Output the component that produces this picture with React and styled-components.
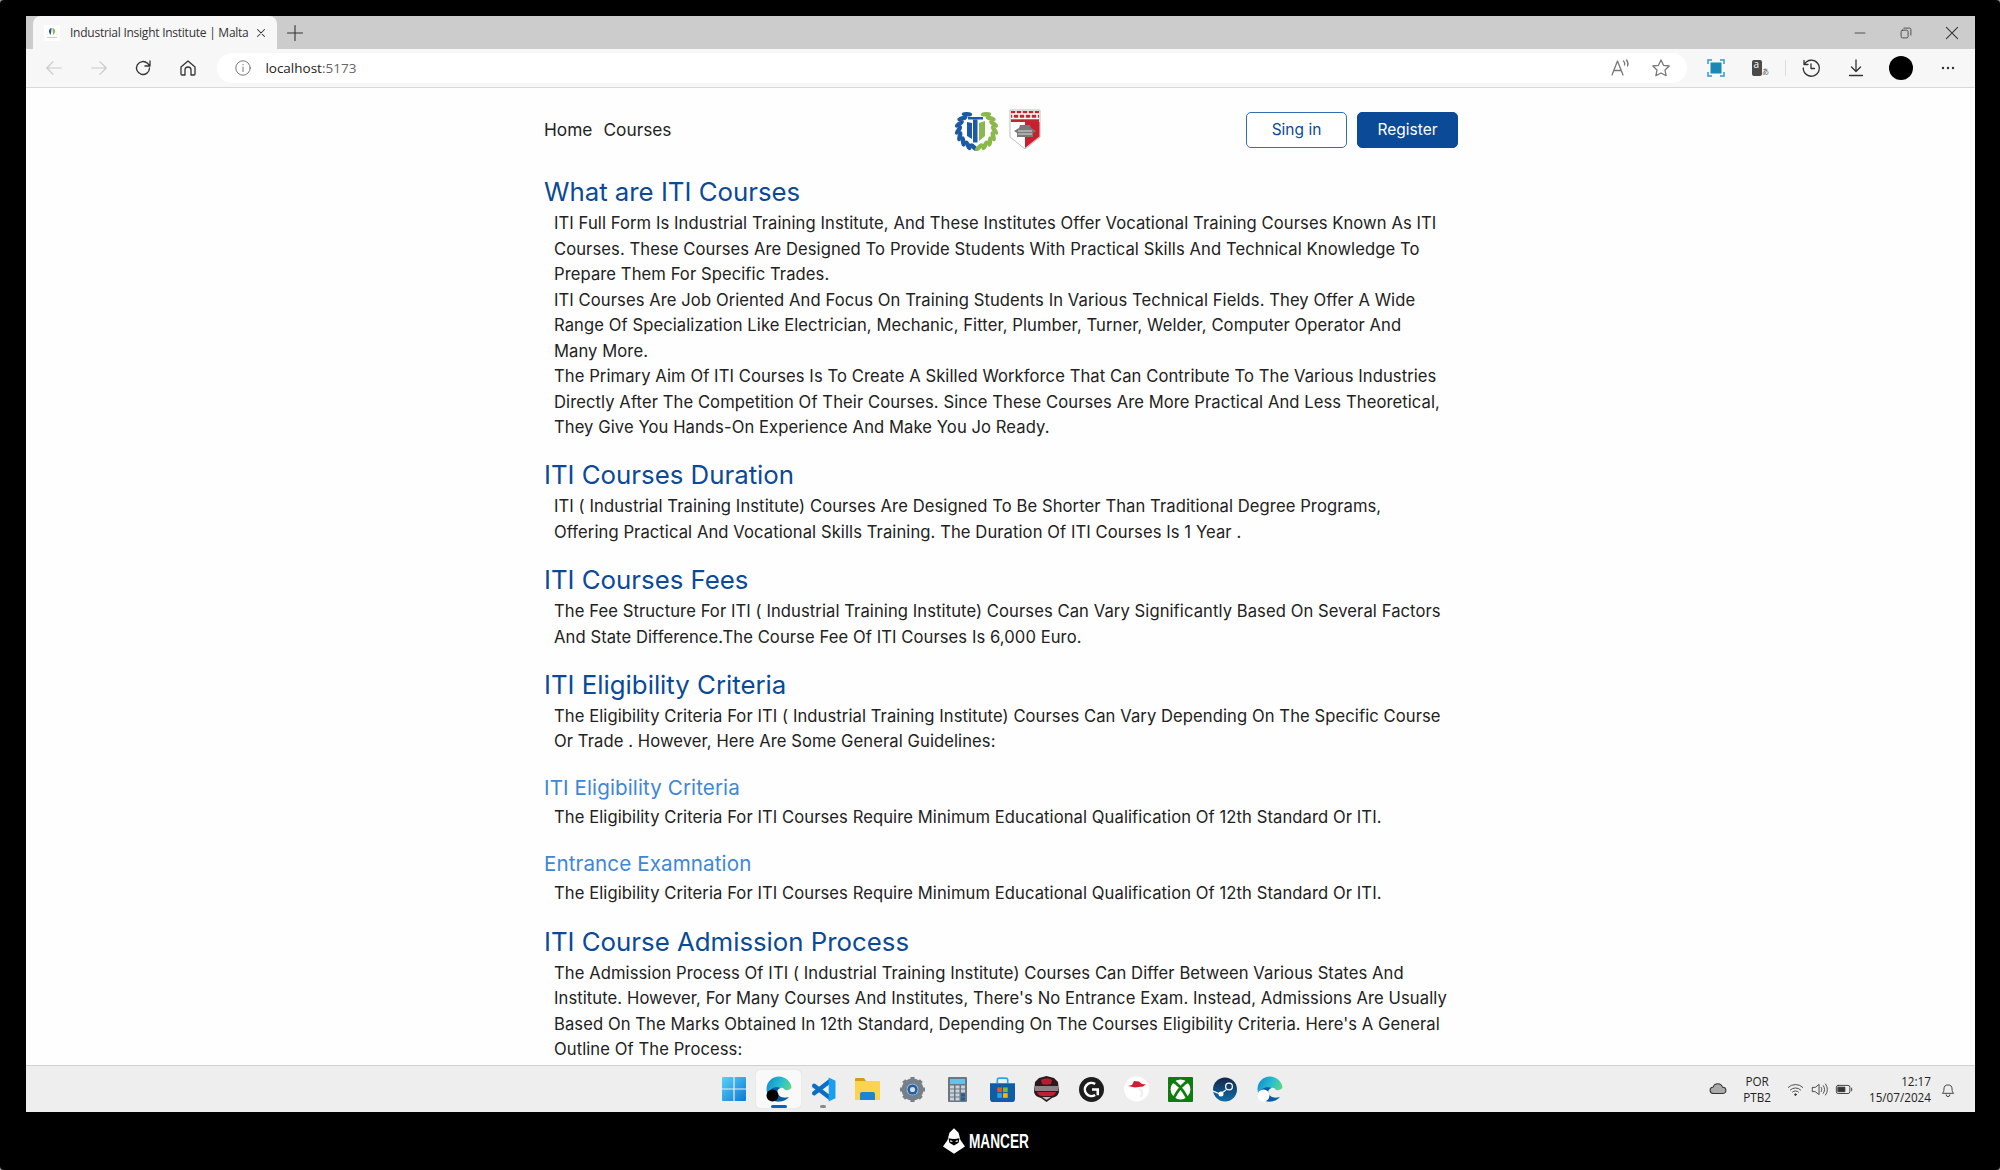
import React from "react";
import styled, { createGlobalStyle } from "styled-components";

const GlobalStyle = createGlobalStyle`
  html, body {
    margin: 0;
    padding: 0;
    background: #999;
  }
  body {
    width: 2000px;
    height: 1170px;
    overflow: hidden;
  }
  h1, h2, h3, p {
    margin: 0;
  }
`;

const Screen = styled.div`
  width: 2000px;
  height: 1170px;
  box-sizing: border-box;
  padding: 16px 25px 0 26px;
  background: #000;
  border-radius: 4px;
  display: flex;
  flex-direction: column;
`;
const Win = styled.div`
  height: 1096px;
  display: flex;
  flex-direction: column;
  background: #fff;
  overflow: hidden;
`;
const TabStrip = styled.div`
  height: 33px;
  flex: none;
  background: #cccccc;
  display: flex;
  align-items: flex-end;
  padding-left: 7px;
`;
const Tab = styled.div`
  width: 244px;
  height: 33px;
  box-sizing: border-box;
  background: #f7f7f7;
  border-radius: 8px 8px 0 0;
  display: flex;
  align-items: center;
  padding: 0 9px 0 11px;
  font: 12px "Open Sans", sans-serif;
  color: #333;
  svg {
    flex: none;
  }
`;
const TabTitle = styled.span`
  margin-left: 10px;
  flex: 1;
  min-width: 0;
  white-space: nowrap;
  letter-spacing: -0.25px;
`;
const NewTab = styled.div`
  width: 36px;
  height: 33px;
  display: flex;
  align-items: center;
  justify-content: center;
`;
const WinControls = styled.div`
  margin-left: auto;
  display: flex;
  height: 33px;
`;
const WinButton = styled.div`
  width: 46px;
  display: flex;
  align-items: center;
  justify-content: center;
`;
const Toolbar = styled.div`
  height: 38px;
  flex: none;
  background: #f7f7f7;
  border-bottom: 1px solid #d9d9d9;
  display: flex;
  align-items: center;
  padding-left: 6px;
`;
const ToolCell = styled.div`
  width: ${p => p.$w || 45}px;
  height: 38px;
  flex: none;
  display: flex;
  align-items: center;
  justify-content: center;
`;
const AddressBar = styled.div`
  width: 1470px;
  height: 30px;
  margin: 0 6px 0 7px;
  flex: none;
  background: #fff;
  border-radius: 15px;
  display: flex;
  align-items: center;
  padding: 0 16px 0 17px;
  box-sizing: border-box;
  font: 13.5px "Open Sans", sans-serif;
`;
const Host = styled.span`
  margin-left: 13px;
  color: #222;
  span {
    color: #666;
  }
`;
const AddressActions = styled.div`
  margin-left: auto;
  display: flex;
  align-items: center;
  gap: 21px;
`;
const ToolSep = styled.div`
  width: 1px;
  height: 16px;
  background: #ddd;
  margin: 0 2px;
  flex: none;
`;
const Avatar = styled.div`
  width: 24px;
  height: 24px;
  border-radius: 50%;
  background: #000;
`;
const TranslateIcon = styled.svg`
  overflow: visible;
`;

const Page = styled.main`
  flex: 1;
  min-height: 0;
  overflow: hidden;
  background: #fefefe;
`;
const Column = styled.div`
  width: 915px;
  margin-left: 518px;
`;
const Header = styled.header`
  height: 83px;
  display: grid;
  grid-template-columns: 1fr auto 1fr;
  align-items: center;
`;
const Nav = styled.nav`
  display: flex;
  gap: 11px;
  font: 400 17.3px "Inter", sans-serif;
  color: #222;
`;
const Logos = styled.div`
  display: flex;
  align-items: center;
  gap: 9px;
  margin-right: 10px;
`;
const Actions = styled.div`
  display: flex;
  justify-content: flex-end;
  gap: 10px;
  padding-right: 1px;
`;
const Button = styled.button`
  width: 101px;
  height: 36px;
  box-sizing: border-box;
  border-radius: 5px;
  border: 1px solid ${p => (p.$primary ? "#0a4a96" : "#2f6fb5")};
  background: ${p => (p.$primary ? "#0a4a96" : "#fff")};
  color: ${p => (p.$primary ? "#fff" : "#0a4a96")};
  font: 400 15.5px "Inter", sans-serif;
  padding: 0;
`;
const Section = styled.section`
  margin-bottom: 14.8px;
`;
const Heading = styled.h2`
  font: 400 25.8px/39px "Inter", sans-serif;
  color: #0a4a96;
  margin-top: 1px;
`;
const SubHeading = styled.h3`
  font: 400 20.6px/34px "Inter", sans-serif;
  color: #3f87d6;
  letter-spacing: 0.1px;
  margin-top: 16.5px;
`;
const Body = styled.p`
  font: 400 16.6px/25.5px "Inter", sans-serif;
  letter-spacing: 0.08px;
  color: #222;
  padding-left: 10px;
  white-space: nowrap;
`;

const Taskbar = styled.footer`
  height: 47px;
  flex: none;
  box-sizing: border-box;
  background: #eeeeee;
  border-top: 1px solid #d0d0d0;
  display: grid;
  grid-template-columns: 1fr auto 1fr;
  align-items: center;
`;
const TaskIcons = styled.div`
  grid-column: 2;
  display: flex;
  align-items: center;
  margin-left: 3px;
`;
const TaskCell = styled.div`
  width: 44.7px;
  height: 38px;
  position: relative;
  display: flex;
  align-items: center;
  justify-content: center;
  box-sizing: border-box;
  border-radius: 4px;
  background: ${p => (p.$active ? "#f9f9f9" : "transparent")};
  box-shadow: ${p => (p.$active ? "0 0 1px rgba(0,0,0,.18)" : "none")};
`;
const Dot = styled.div`
  position: absolute;
  bottom: 0;
  left: 50%;
  height: 3px;
  border-radius: 2px;
  transform: translateX(-50%);
  width: ${p => (p.$active ? 16 : 6)}px;
  background: ${p => (p.$active ? "#0067c0" : "#8a8a8a")};
`;
const Tray = styled.div`
  grid-column: 3;
  display: flex;
  align-items: center;
  justify-content: flex-end;
  font: 11.7px "Open Sans", sans-serif;
  color: #222;
  padding-right: 18px;
`;
const Lang = styled.div`
  margin: 0 16px;
  text-align: center;
  line-height: 16px;
`;
const TrayIcons = styled.div`
  display: flex;
  align-items: center;
  gap: 7px;
`;
const Clock = styled.div`
  margin: 0 8px 0 16px;
  text-align: right;
  line-height: 16px;
`;
const Brand = styled.div`
  flex: 1;
  display: flex;
  align-items: center;
  justify-content: center;
  gap: 4px;
  padding-right: 29px;
`;
const BrandName = styled.span`
  display: block;
  width: 60px;
  font: 700 21px "Liberation Sans", sans-serif;
  color: #fff;
  white-space: nowrap;
  transform: scaleX(0.65);
  transform-origin: left center;
`;

const sections = [
  {
    title: "What are ITI Courses",
    lines: [
      "ITI Full Form Is Industrial Training Institute, And These Institutes Offer Vocational Training Courses Known As ITI",
      "Courses. These Courses Are Designed To Provide Students With Practical Skills And Technical Knowledge To",
      "Prepare Them For Specific Trades.",
      "ITI Courses Are Job Oriented And Focus On Training Students In Various Technical Fields. They Offer A Wide",
      "Range Of Specialization Like Electrician, Mechanic, Fitter, Plumber, Turner, Welder, Computer Operator And",
      "Many More.",
      "The Primary Aim Of ITI Courses Is To Create A Skilled Workforce That Can Contribute To The Various Industries",
      "Directly After The Competition Of Their Courses. Since These Courses Are More Practical And Less Theoretical,",
      "They Give You Hands-On Experience And Make You Jo Ready."
    ]
  },
  {
    title: "ITI Courses Duration",
    lines: [
      "ITI ( Industrial Training Institute) Courses Are Designed To Be Shorter Than Traditional Degree Programs,",
      "Offering Practical And Vocational Skills Training. The Duration Of ITI Courses Is 1 Year ."
    ]
  },
  {
    title: "ITI Courses Fees",
    lines: [
      "The Fee Structure For ITI ( Industrial Training Institute) Courses Can Vary Significantly Based On Several Factors",
      "And State Difference.The Course Fee Of ITI Courses Is 6,000 Euro."
    ]
  },
  {
    title: "ITI Eligibility Criteria",
    lines: [
      "The Eligibility Criteria For ITI ( Industrial Training Institute) Courses Can Vary Depending On The Specific Course",
      "Or Trade . However, Here Are Some General Guidelines:"
    ],
    subs: [
      {
        title: "ITI Eligibility Criteria",
        text: "The Eligibility Criteria For ITI Courses Require Minimum Educational Qualification Of 12th Standard Or ITI."
      },
      {
        title: "Entrance Examnation",
        text: "The Eligibility Criteria For ITI Courses Require Minimum Educational Qualification Of 12th Standard Or ITI."
      }
    ]
  },
  {
    title: "ITI Course Admission Process",
    lines: [
      "The Admission Process Of ITI ( Industrial Training Institute) Courses Can Differ Between Various States And",
      "Institute. However, For Many Courses And Institutes, There's No Entrance Exam. Instead, Admissions Are Usually",
      "Based On The Marks Obtained In 12th Standard, Depending On The Courses Eligibility Criteria. Here's A General",
      "Outline Of The Process:"
    ]
  }
];

const Stroke = ({ size = 18, color = "#555", width = 1.3, children }) => (
  <svg width={size} height={size} viewBox="0 0 20 20" fill="none" stroke={color} strokeWidth={width} strokeLinecap="round" strokeLinejoin="round">
    {children}
  </svg>
);

const Favicon = () => (
  <svg width="16" height="16" viewBox="0 0 16 16">
    <rect width="16" height="16" rx="2" fill="#fff" />
    <path d="M7.6 3C4.5 3.500 4 7.500 6.800 10z" fill="#1c5aa6" />
    <path d="M8.400 3c3.100.5 3.600 4.500.8 7z" fill="#8ab84a" />
    <rect x="3" y="12" width="10" height="1" fill="#ccd" />
  </svg>
);

// laurel leaves placed along an arc, left half blue and right half green
const leafAngles = [32, 52, 72, 92, 112, 132, 152, 172];

const WreathLogo = () => (
  <svg width="47" height="43" viewBox="0 0 47 43">
    {leafAngles.map(a => (
      <g key={a}>
        <ellipse cx="23.500" cy="3.500" rx="2.300" ry="5.200" fill="#1c5aa6" transform={`rotate(${-a} 23.500 21.500) rotate(-55 23.500 3.500)`} />
        <ellipse cx="23.500" cy="3.500" rx="2.300" ry="5.200" fill="#8ab84a" transform={`rotate(${a} 23.500 21.500) rotate(55 23.500 3.500)`} />
      </g>
    ))}
    <rect x="15" y="9" width="15" height="2.500" fill="#1c5aa6" />
    <path d="M14 14l5 1v16l-5-3z" fill="#1c5aa6" />
    <rect x="20" y="11.500" width="4.500" height="23" fill="#1c5aa6" />
    <path d="M26 33V15l6-2v15z" fill="#8ab84a" />
  </svg>
);

const ShieldLogo = () => (
  <svg width="32" height="41" viewBox="0 0 32 41">
    <path d="M1 1h30v27L16 40 1 28z" fill="#fff" stroke="#bdbdbd" />
    <path d="M2 2h28v11H2z" fill="#b92a33" />
    <path d="M16 13h14.500v14.500L16 39z" fill="#c8202c" />
    <path d="M2 5h28M2 9.500h28M7 2v3M13 2v3M19 2v3M25 2v3M4 5v4.500M10 5v4.500M16 5v4.500M22 5v4.500M28 5v4.500" stroke="#fff" strokeWidth="1.500" />
    <path d="M5 22l5-3 1-3h10l1 3 5 3-3 2v4H8v-4z" fill="#7a7a7a" />
    <path d="M9 22h14M9 25h14" stroke="#ddd" />
  </svg>
);

const WindowsIcon = () => (
  <svg width="24" height="24" viewBox="0 0 24 24">
    <defs>
      <linearGradient id="win" x1="0" y1="0" x2="1" y2="1">
        <stop offset="0" stopColor="#5ad1f8" />
        <stop offset="1" stopColor="#0a78d6" />
      </linearGradient>
    </defs>
    <path d="M0 1a1 1 0 011-1h10.400v11.400H0zM12.600 0H23a1 1 0 011 1v10.400H12.600zM0 12.600h11.400V24H1a1 1 0 01-1-1zM12.600 12.600H24V23a1 1 0 01-1 1H12.600z" fill="url(#win)" />
  </svg>
);

const EdgeIcon = ({ id, badge }) => (
  <svg width="26" height="26" viewBox="0 0 26 26">
    <defs>
      <linearGradient id={id} x1="0" y1="0.2" x2="1" y2="0.7">
        <stop offset="0" stopColor="#0f8fd4" />
        <stop offset="0.55" stopColor="#2fc4c8" />
        <stop offset="1" stopColor="#72de62" />
      </linearGradient>
    </defs>
    <path d="M13 .5C6 .5 .5 6 .5 13c0 7 5.500 12.500 12.500 12.500 4 0 7.500-1.500 10-4.500-4 1.500-10 .5-11.500-3.500-1-2.500.5-5 3-5.500 2-.5 3.500.5 4.500 2 2 .5 5.500 0 6.500-2.500C25 5.500 19.500 .5 13 .5z" fill={`url(#${id})`} />
    <path d="M2 20c3 5 10 7 16 4.500 2-.8 3.500-2 5-3.500-4 1.500-10 .5-11.500-3.500-1-2.500.5-5 3-5.500-4-2-12-.5-12.500 8z" fill="#0b5aa8" />
    <circle cx="6.500" cy="19.500" r="6" fill={badge} />
  </svg>
);

const VsCodeIcon = () => (
  <svg width="25" height="25" viewBox="0 0 24 24">
    <path d="M18 4L3 15.500M18 20L3 8.500" stroke="#0a6fc4" strokeWidth="4.200" strokeLinecap="round" fill="none" />
    <path d="M17 .5l6.500 3v17l-6.500 3z" fill="#1a9fef" />
  </svg>
);

const FolderIcon = () => (
  <svg width="25" height="24" viewBox="0 0 25 24">
    <path d="M0 2a1 1 0 011-1h8l2 3H0z" fill="#d69a18" />
    <path d="M0 4h25v19H0z" fill="#fcd34d" />
    <path d="M5 17a2 2 0 012-2h11a2 2 0 012 2v6H5z" fill="#1b85d1" />
  </svg>
);

const GearIcon = () => (
  <svg width="25" height="25" viewBox="0 0 24 24">
    <circle cx="12" cy="12" r="8" fill="none" stroke="#75808a" strokeWidth="5" />
    <path d="M12 0v24M0 12h24M3.500 3.500l17 17M20.500 3.500l-17 17" stroke="#75808a" strokeWidth="4" strokeDasharray="4 16" />
    <circle cx="12" cy="12" r="5" fill="#1f5fa8" />
    <circle cx="12" cy="12" r="2.500" fill="#d5dde5" />
  </svg>
);

const CalcIcon = () => (
  <svg width="19" height="25" viewBox="0 0 19 25">
    <rect width="19" height="25" rx="1" fill="#6b7680" />
    <rect x="2" y="2" width="15" height="5" fill="#5fc4ee" />
    {[9, 13, 17, 21].map(y =>
      [2, 7.5, 13].map(x => <rect key={`${x}-${y}`} x={x} y={y - 0.5} width="4" height="3" fill={x === 13 && y > 15 ? "#1d5f9c" : "#c9d2da"} />)
    )}
  </svg>
);

const StoreIcon = () => (
  <svg width="25" height="25" viewBox="0 0 24 24">
    <path d="M7 6V3a2 2 0 012-2h6a2 2 0 012 2v3" fill="none" stroke="#2da6e8" strokeWidth="1.600" />
    <path d="M0 6h24v15a3 3 0 01-3 3H3a3 3 0 01-3-3z" fill="#0f5da6" />
    <rect x="7" y="10" width="4.500" height="4.500" fill="#e8552b" />
    <rect x="12.500" y="10" width="4.500" height="4.500" fill="#7eb832" />
    <rect x="7" y="15.500" width="4.500" height="4.500" fill="#27a3e8" />
    <rect x="12.500" y="15.500" width="4.500" height="4.500" fill="#f7b500" />
  </svg>
);

const RedragonIcon = () => (
  <svg width="25" height="26" viewBox="0 0 25 26">
    <path d="M12.500 0L20 2l4 4 1 10c-1 4-4 5-7 6l-5.500 4L7 22c-3-1-6-2-7-6L1 6l4-4z" fill="#2a1a1e" />
    <path d="M7 4c3-2 8-2 11 0l-1 4c-3 1-6 1-9 0z" fill="#b81c30" />
    <rect x="1" y="10" width="23" height="5" fill="#d9d9d9" opacity="0.55" />
    <path d="M3 16h19c-1 3-3 4-5 4H8c-2 0-4-1-5-4z" fill="#c41e34" />
    <path d="M8 21h9l-4.500 3z" fill="#bbb" />
  </svg>
);

const LogiIcon = () => (
  <svg width="25" height="25" viewBox="0 0 24 24">
    <circle cx="12" cy="12" r="12" fill="#1d1d1d" />
    <path d="M15.500 6.800A6.300 6.300 0 1015.500 17.200M12.500 12h5.500v5.500" fill="none" stroke="#fff" strokeWidth="2.400" />
  </svg>
);

const RedHatIcon = () => (
  <svg width="25" height="26" viewBox="0 0 25 26">
    <circle cx="12.500" cy="13" r="12.500" fill="#fff" />
    <path d="M4 10l4-1 2-4 5 .5 3 2.500 4 .5-3 2-8 1z" fill="#cc2030" />
    <path d="M15 13c4 1 4 6 1 8" fill="none" stroke="#eeeeee" strokeWidth="2" />
  </svg>
);

const XboxIcon = () => (
  <svg width="25" height="25" viewBox="0 0 24 24">
    <rect width="24" height="24" rx="1" fill="#107c10" />
    <circle cx="12" cy="12" r="9.500" fill="#fff" />
    <path d="M4 4c4 1 10 8 15 17M20 4c-4 1-10 8-15 17" fill="none" stroke="#107c10" strokeWidth="2.600" />
  </svg>
);

const SteamIcon = () => (
  <svg width="24" height="25" viewBox="0 0 24 25">
    <defs>
      <linearGradient id="steam" x1="0" y1="0" x2="0" y2="1">
        <stop offset="0" stopColor="#14264a" />
        <stop offset="1" stopColor="#0f6ea8" />
      </linearGradient>
    </defs>
    <circle cx="12" cy="12.500" r="12" fill="url(#steam)" />
    <circle cx="16" cy="9.500" r="3.400" fill="none" stroke="#fff" strokeWidth="1.300" />
    <path d="M0 14l7 3 6-4" fill="none" stroke="#fff" strokeWidth="1.300" />
    <circle cx="8" cy="17" r="2.500" fill="#fff" />
  </svg>
);

const MancerLogo = () => (
  <svg width="22" height="28" viewBox="0 0 24 28">
    <path d="M12 0l5 5 2 8 5 7-12 8L0 20l5-7 2-8z" fill="#fff" />
    <path d="M6 11c4 1 8 1 12 0l-1 5-5 3-5-3z" fill="#000" />
    <path d="M8 13l3 1.500-3 .5zM16 13l-3 1.500 3 .5z" fill="#fff" />
  </svg>
);

const taskIcons = [
  { key: "win", node: <WindowsIcon /> },
  { key: "edge", node: <EdgeIcon id="edge1" badge="#000" />, active: true },
  { key: "vs", node: <VsCodeIcon />, running: true },
  { key: "folder", node: <FolderIcon /> },
  { key: "gear", node: <GearIcon /> },
  { key: "calc", node: <CalcIcon /> },
  { key: "store", node: <StoreIcon /> },
  { key: "red", node: <RedragonIcon /> },
  { key: "logi", node: <LogiIcon /> },
  { key: "hat", node: <RedHatIcon /> },
  { key: "xbox", node: <XboxIcon /> },
  { key: "steam", node: <SteamIcon /> },
  { key: "edge2", node: <EdgeIcon id="edge2" badge="#fff" /> }
];

const App = () => (
  <>
    <GlobalStyle />
    <Screen>
      <Win>
        <TabStrip>
          <Tab>
            <Favicon />
            <TabTitle>Industrial Insight Institute | Malta</TabTitle>
            <Stroke size={14} color="#333" width={1.5}><path d="M5 5l10 10M15 5L5 15" /></Stroke>
          </Tab>
          <NewTab>
            <Stroke size={20} color="#333" width={1.1}><path d="M10 2.500v15M2.500 10h15" /></Stroke>
          </NewTab>
          <WinControls>
            <WinButton><Stroke size={14} color="#444"><path d="M3 10h14" /></Stroke></WinButton>
            <WinButton>
              <Stroke size={14} color="#444"><rect x="3" y="6" width="10" height="11" rx="2" /><path d="M7 3h8a2 2 0 012 2v8" /></Stroke>
            </WinButton>
            <WinButton><Stroke size={16} color="#333"><path d="M3 3l14 14M17 3L3 17" /></Stroke></WinButton>
          </WinControls>
        </TabStrip>
        <Toolbar>
          <ToolCell $w={44.6}><Stroke color="#c9c9c9"><path d="M18 10H2M9 3l-7 7 7 7" /></Stroke></ToolCell>
          <ToolCell $w={44.6}><Stroke color="#c9c9c9"><path d="M2 10h16M11 3l7 7-7 7" /></Stroke></ToolCell>
          <ToolCell $w={44.6}><Stroke size={20} color="#333"><path d="M16.500 10a6.500 6.500 0 11-2-4.700L17 8M17 3v5h-5" /></Stroke></ToolCell>
          <ToolCell $w={44.6}><Stroke size={20} color="#333"><path d="M3 9l7-6 7 6v7a1 1 0 01-1 1h-3v-5a3 3 0 00-6 0v5H4a1 1 0 01-1-1z" /></Stroke></ToolCell>
          <AddressBar>
            <Stroke size={18} color="#666" width={1}><circle cx="10" cy="10" r="8" /><path d="M10 9v5M10 6v.5" /></Stroke>
            <Host>localhost<span>:5173</span></Host>
            <AddressActions>
              <Stroke size={20} color="#777"><path d="M2 17l5.500-14L13 17M4 12.500h7M13.500 3c1 1 1.500 2.500 1 4M16.500 2c1.500 2 2 4 1 6" /></Stroke>
              <Stroke size={20} color="#777"><path d="M10 2l2.500 5.300 5.700.7-4.200 4 1.100 5.700L10 15l-5.100 2.700L6 12 1.800 8l5.700-.7z" /></Stroke>
            </AddressActions>
          </AddressBar>
          <ToolCell>
            <svg width="18" height="18" viewBox="0 0 18 18" fill="none" stroke="#2e9ccb" strokeWidth="1.500">
              <rect x="3.500" y="3.500" width="11" height="11" fill="#1b87b5" stroke="none" />
              <path d="M1 5V1h4M13 1h4v4M17 13v4h-4M5 17H1v-4" />
            </svg>
          </ToolCell>
          <ToolCell>
            <TranslateIcon width="18" height="18" viewBox="0 0 18 18">
              <rect x="0" y="1" width="10" height="16" rx="2" fill="#4a4a4a" />
              <text x="1.500" y="9" fontSize="10" fontFamily="Open Sans" fill="#fff">a</text>
              <text x="10" y="15" fontSize="7" fontFamily="Noto Sans CJK JP" fill="#555">あ</text>
            </TranslateIcon>
          </ToolCell>
          <ToolSep />
          <ToolCell><Stroke size={20} color="#333"><path d="M3.500 6a8 8 0 11-1.200 4M3 2.500V6.500h4M10 6v4.500h3.500" /></Stroke></ToolCell>
          <ToolCell><Stroke size={20} color="#333"><path d="M10 2v11M5.500 9l4.500 4.500L14.500 9M3.500 17.500h13" /></Stroke></ToolCell>
          <ToolCell><Avatar /></ToolCell>
          <ToolCell $w={50}>
            <svg width="14" height="4" viewBox="0 0 14 4" fill="#333"><circle cx="2" cy="2" r="1.200" /><circle cx="7" cy="2" r="1.200" /><circle cx="12" cy="2" r="1.200" /></svg>
          </ToolCell>
        </Toolbar>
        <Page>
          <Column>
            <Header>
              <Nav><span>Home</span><span>Courses</span></Nav>
              <Logos><WreathLogo /><ShieldLogo /></Logos>
              <Actions>
                <Button>Sing in</Button>
                <Button $primary>Register</Button>
              </Actions>
            </Header>
            {sections.map(s => (
              <Section key={s.title}>
                <Heading>{s.title}</Heading>
                <Body>
                  {s.lines.map(l => <React.Fragment key={l}>{l}<br /></React.Fragment>)}
                </Body>
                {s.subs && s.subs.map(sub => (
                  <React.Fragment key={sub.title}>
                    <SubHeading>{sub.title}</SubHeading>
                    <Body>{sub.text}</Body>
                  </React.Fragment>
                ))}
              </Section>
            ))}
          </Column>
        </Page>
        <Taskbar>
          <TaskIcons>
            {taskIcons.map(i => (
              <TaskCell key={i.key} $active={i.active}>
                {i.node}
                {(i.active || i.running) && <Dot $active={i.active} />}
              </TaskCell>
            ))}
          </TaskIcons>
          <Tray>
            <Stroke size={18} color="#333" width={1.2}><path d="M5 15a3.500 3.500 0 01-.5-7 5.500 5.500 0 0110.500 0 3.500 3.500 0 01.5 7z" fill="#aaa" /></Stroke>
            <Lang>POR<br />PTB2</Lang>
            <TrayIcons>
              <Stroke size={17} color="#333" width={1}><path d="M1.500 7.500a12 12 0 0117 0M4 10.500a8.500 8.500 0 0112 0M6.500 13a5 5 0 017 0" /><circle cx="10" cy="16" r="1" fill="#333" /></Stroke>
              <Stroke size={17} color="#333" width={1}><path d="M2 7.500h3L9.500 4v12L5 12.500H2zM12 7.500c1 1.500 1 3.500 0 5M14.500 5.500c2 3 2 6 0 9M17 3.500c3 4 3 9 0 13" /></Stroke>
              <Stroke size={18} color="#333" width={1}><rect x="1.500" y="6" width="15" height="9" rx="2" /><rect x="3.500" y="8" width="7.500" height="5" fill="#333" /><path d="M18.500 9v3" /></Stroke>
            </TrayIcons>
            <Clock>12:17<br />15/07/2024</Clock>
            <Stroke size={18} color="#333" width={1}><path d="M4 14.500c1-1 1.500-2 1.500-4.500a4.500 4.500 0 019 0c0 2.500.5 3.500 1.500 4.500zM8 16.500a2 2 0 004 0" /></Stroke>
          </Tray>
        </Taskbar>
      </Win>
      <Brand>
        <MancerLogo />
        <BrandName>MANCER</BrandName>
      </Brand>
    </Screen>
  </>
);

export default App;
